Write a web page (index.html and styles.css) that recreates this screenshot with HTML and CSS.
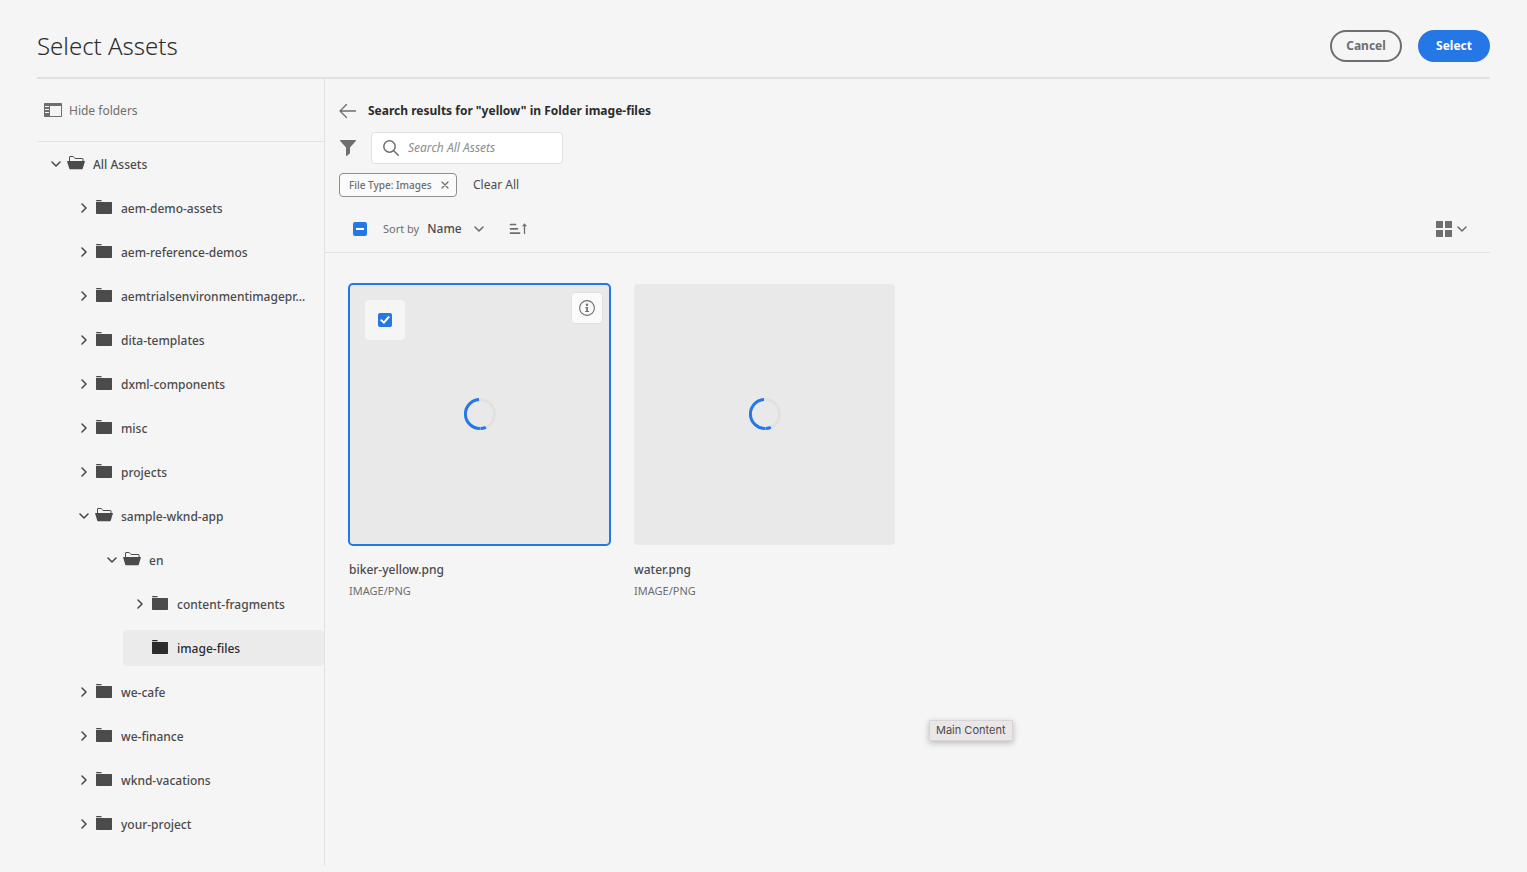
FILE: index.html
```html
<!DOCTYPE html>
<html lang="en">
<head>
<meta charset="utf-8">
<title>Select Assets</title>
<link rel="stylesheet" href="styles.css">
</head>
<body>
<svg class="sprite" aria-hidden="true">
  <symbol id="folder" viewBox="0 0 18 18"><path d="M1 2.200V1.800C1 1.300 1.400 1 1.800 1H5.500C6 1 6.300 1.200 6.600 1.500L7.200 2.200ZM1 3H16.500C16.800 3 17 3.200 17 3.500V14.300C17 14.700 16.700 15 16.300 15H1.700C1.300 15 1 14.700 1 14.300Z"/></symbol>
  <symbol id="folder-open" viewBox="0 0 18 18"><path d="M2.500 7V2C2.500 1.700 2.700 1.500 3 1.500H6.200L8 3.500H15.500C15.800 3.500 16 3.700 16 4V7" fill="none" stroke="currentColor"/><path d="M.4 6H17.600C17.900 6 18 6.200 17.900 6.500L15.700 13.700C15.600 14 15.400 14.200 15.100 14.200H2.900C2.600 14.200 2.400 14 2.300 13.700L.1 6.500C0 6.200.1 6 .4 6Z"/></symbol>
  <symbol id="chevron" viewBox="0 0 12 12"><path d="M2 4L6 8L10 4" fill="none" stroke="currentColor" stroke-width="1.600" stroke-linecap="round" stroke-linejoin="round"/></symbol>
  <symbol id="spinner" viewBox="0 0 32 32"><g fill="none" stroke-width="3"><circle cx="16" cy="16" r="14.500" stroke="#e1e1e1"/><path stroke="#2577e5" d="M15 1.530A14.500 14.500 0 0 0 15.900 30.500M16.400 30.490A14.500 14.500 0 0 0 21.800 29.300"/></g></symbol>
</svg>

<div class="dialog">
  <header class="header">
    <h1 class="title">Select Assets</h1>
    <div class="actions">
      <button class="pill" type="button">Cancel</button>
      <button class="pill pill-primary" type="button">Select</button>
    </div>
  </header>

  <div class="body">
    <aside class="sidebar">
      <div class="sidebar-head">
        <button class="hide-folders" type="button">
          <svg class="icon" viewBox="0 0 18 18"><path fill-rule="evenodd" d="M.7 2H17.300C17.700 2 18 2.300 18 2.700V15.300C18 15.700 17.700 16 17.300 16H.7C.3 16 0 15.700 0 15.300V2.700C0 2.300.3 2 .7 2ZM6 5V15H17V5ZM1 5V6H5V5ZM1 8V9H5V8ZM1 11V12H5V11Z"/></svg>
          <span>Hide folders</span>
        </button>
      </div>
      <nav class="tree" aria-label="Folders">
        <ul>
          <li><button class="node open" type="button"><svg class="chev"><use href="#chevron"/></svg><svg class="icon"><use href="#folder-open"/></svg><span>All Assets</span></button>
            <ul>
              <li><button class="node" type="button"><svg class="chev"><use href="#chevron"/></svg><svg class="icon"><use href="#folder"/></svg><span>aem-demo-assets</span></button></li>
              <li><button class="node" type="button"><svg class="chev"><use href="#chevron"/></svg><svg class="icon"><use href="#folder"/></svg><span>aem-reference-demos</span></button></li>
              <li><button class="node" type="button"><svg class="chev"><use href="#chevron"/></svg><svg class="icon"><use href="#folder"/></svg><span>aemtrialsenvironmentimagepr…</span></button></li>
              <li><button class="node" type="button"><svg class="chev"><use href="#chevron"/></svg><svg class="icon"><use href="#folder"/></svg><span>dita-templates</span></button></li>
              <li><button class="node" type="button"><svg class="chev"><use href="#chevron"/></svg><svg class="icon"><use href="#folder"/></svg><span>dxml-components</span></button></li>
              <li><button class="node" type="button"><svg class="chev"><use href="#chevron"/></svg><svg class="icon"><use href="#folder"/></svg><span>misc</span></button></li>
              <li><button class="node" type="button"><svg class="chev"><use href="#chevron"/></svg><svg class="icon"><use href="#folder"/></svg><span>projects</span></button></li>
              <li><button class="node open" type="button"><svg class="chev"><use href="#chevron"/></svg><svg class="icon"><use href="#folder-open"/></svg><span>sample-wknd-app</span></button>
                <ul>
                  <li><button class="node open" type="button"><svg class="chev"><use href="#chevron"/></svg><svg class="icon"><use href="#folder-open"/></svg><span>en</span></button>
                    <ul>
                      <li><button class="node" type="button"><svg class="chev"><use href="#chevron"/></svg><svg class="icon"><use href="#folder"/></svg><span>content-fragments</span></button></li>
                      <li><button class="node leaf selected" type="button"><svg class="icon"><use href="#folder"/></svg><span>image-files</span></button></li>
                    </ul>
                  </li>
                </ul>
              </li>
              <li><button class="node" type="button"><svg class="chev"><use href="#chevron"/></svg><svg class="icon"><use href="#folder"/></svg><span>we-cafe</span></button></li>
              <li><button class="node" type="button"><svg class="chev"><use href="#chevron"/></svg><svg class="icon"><use href="#folder"/></svg><span>we-finance</span></button></li>
              <li><button class="node" type="button"><svg class="chev"><use href="#chevron"/></svg><svg class="icon"><use href="#folder"/></svg><span>wknd-vacations</span></button></li>
              <li><button class="node" type="button"><svg class="chev"><use href="#chevron"/></svg><svg class="icon"><use href="#folder"/></svg><span>your-project</span></button></li>
            </ul>
          </li>
        </ul>
      </nav>
    </aside>

    <main class="main">
      <div class="crumb">
        <button class="plain" type="button" aria-label="Back"><svg class="icon" viewBox="0 0 18 18"><path d="M16.500 9H1.500M7.500 2.500L1 9L7.500 15.500" fill="none" stroke="currentColor" stroke-width="1.300" stroke-linecap="round" stroke-linejoin="round"/></svg></button>
        <h2 class="crumb-title">Search results for "yellow" in Folder image-files</h2>
      </div>
      <div class="search-row">
        <button class="plain" type="button" aria-label="Filter"><svg class="icon" viewBox="0 0 18 18"><path d="M1.600 1H16.400C16.900 1 17.100 1.600 16.800 2L11 8.500V14.200L7.800 16.900C7.500 17.100 7 16.900 7 16.500V8.500L1.200 2C.9 1.600 1.100 1 1.600 1Z"/></svg></button>
        <div class="search">
          <svg class="icon" viewBox="0 0 18 18"><g fill="none" stroke="currentColor" stroke-width="1.500" stroke-linecap="round"><circle cx="7.500" cy="7.500" r="5.700"/><path d="M11.700 11.700L16.300 16.300"/></g></svg>
          <input type="search" aria-label="Search All Assets" placeholder="Search All Assets">
        </div>
      </div>
      <div class="chips">
        <span class="chip">File Type: Images <button class="plain" type="button" aria-label="Remove filter"><svg class="cross" viewBox="0 0 8 8"><path d="M1 1L7 7M7 1L1 7" stroke="currentColor" stroke-width="1.300" stroke-linecap="round"/></svg></button></span>
        <button class="clear" type="button">Clear All</button>
      </div>
      <div class="toolbar">
        <input class="box mixed" type="checkbox" checked aria-label="Select all">
        <label class="sort-label" for="sort">Sort by</label>
        <div class="picker">
          <select id="sort"><option>Name</option></select>
          <svg class="chev"><use href="#chevron"/></svg>
        </div>
        <button class="plain" type="button" aria-label="Sort ascending"><svg class="icon" viewBox="0 0 18 18"><path d="M1.500 4.500H6.500M1.500 8.800H8.500M1.500 13.200H10.500" stroke="currentColor" stroke-width="1.700" stroke-linecap="round"/><path d="M15.500 14V5" stroke="currentColor" stroke-width="1.300"/><path d="M15.500 3.200L18 6.200H13Z"/></svg></button>
        <button class="plain view" type="button" aria-label="View"><svg class="icon" viewBox="0 0 18 18"><path d="M1 1.500C1 1.200 1.200 1 1.500 1H8V8H1ZM10 1H16.500C16.800 1 17 1.200 17 1.500V8H10ZM1 10H8V17H1.500C1.200 17 1 16.800 1 16.500ZM10 10H17V16.500C17 16.800 16.800 17 16.500 17H10Z"/></svg><svg class="chev"><use href="#chevron"/></svg></button>
      </div>

      <section class="cards" aria-label="Assets">
        <article class="card">
          <div class="thumb chosen">
            <svg class="spinner"><use href="#spinner"/></svg>
            <label class="pick"><input class="box tick" type="checkbox" checked aria-label="biker-yellow.png"></label>
            <button class="info" type="button" aria-label="Details"><svg class="icon" viewBox="0 0 18 18"><circle cx="9" cy="9" r="7.400" fill="none" stroke="currentColor" stroke-width="1.100"/><circle cx="9" cy="5.700" r="1.200"/><path d="M7.300 8H9.900V11.900H11V13H7.200V11.900H8.200V9H7.300Z"/></svg></button>
          </div>
          <h3 class="name">biker-yellow.png</h3>
          <p class="kind">IMAGE/PNG</p>
        </article>
        <article class="card">
          <div class="thumb"><svg class="spinner"><use href="#spinner"/></svg></div>
          <h3 class="name">water.png</h3>
          <p class="kind">IMAGE/PNG</p>
        </article>
      </section>
      <div class="tooltip" role="tooltip">Main Content</div>
    </main>
  </div>
</div>
</body>
</html>
```
FILE: styles.css
```css
* { box-sizing: border-box; }

body {
  margin: 0;
  background: #f5f5f5;
  color: #4b4b4b;
  font: 12px/18px "Noto Sans", "Open Sans", sans-serif;
}

button, input, select { font: inherit; color: inherit; }
button { margin: 0; padding: 0; border: 0; background: none; cursor: pointer; }
ul { list-style: none; margin: 0; padding: 0; }
svg { flex: none; fill: currentColor; }

.sprite { display: none; }
.icon { display: block; width: 18px; height: 18px; }
.chev { display: block; width: 12px; height: 12px; }

.dialog {
  min-height: 100vh;
  padding: 14px 37px 6px;
  display: flex;
  flex-direction: column;
}

.header {
  display: flex;
  align-items: center;
  justify-content: space-between;
  height: 65px;
  border-bottom: 2px solid #e1e1e1;
}
.title { margin: 0; font-size: 24px; line-height: 32px; font-weight: 300; color: #2c2c2c; }
.actions { display: flex; gap: 16px; }
.pill {
  height: 32px;
  min-width: 72px;
  border: 2px solid #6e6e6e;
  border-radius: 16px;
  color: #6e6e6e;
  font-weight: 700;
}
.pill-primary { border-color: #2577e5; background: #2577e5; color: #fff; }

.body { flex: 1; display: flex; }

.sidebar { width: 288px; flex: none; border-right: 1px solid #e1e1e1; }
.sidebar-head {
  display: flex;
  align-items: center;
  height: 63px;
  padding-left: 7px;
  border-bottom: 1px solid #e1e1e1;
}
.hide-folders { display: flex; align-items: center; gap: 7px; color: #6e6e6e; }
.hide-folders span, .node span { padding-top: 2px; }

.tree { padding: 4px 0 0 2px; }
.tree ul ul { padding-left: 28px; }
.node {
  display: flex;
  align-items: center;
  width: 100%;
  height: 36px;
  margin-bottom: 8px;
  padding-left: 11px;
  border-radius: 4px;
  font-weight: 500;
  text-align: left;
  white-space: nowrap;
}
.node .chev { margin-right: 5px; transform: rotate(-90deg); }
.node.open .chev { transform: none; }
.node .icon { margin-right: 8px; }
.leaf { padding-left: 28px; }
.selected { background: #ebebeb; color: #2c2c2c; }

.main { flex: 1; min-width: 0; position: relative; }
.plain { display: flex; align-items: center; color: #6e6e6e; }

.crumb { display: flex; align-items: center; gap: 11px; padding: 23px 14px 12px; }
.crumb-title { margin: 0; font-size: 12px; line-height: 18px; font-weight: 700; color: #2c2c2c; }

.search-row { display: flex; align-items: center; gap: 14px; padding-left: 14px; }
.search {
  display: flex;
  align-items: center;
  gap: 8px;
  width: 192px;
  height: 32px;
  padding: 0 10px;
  border: 1px solid #e1e1e1;
  border-radius: 4px;
  background: #fff;
  color: #6e6e6e;
}
.search input { flex: 1; min-width: 0; padding: 0; border: 0; outline: 0; background: none; }
.search input::placeholder { color: #8e8e8e; font-style: italic; }

.chips { display: flex; align-items: center; gap: 16px; padding: 9px 14px 0; }
.chip {
  display: flex;
  align-items: center;
  justify-content: space-between;
  gap: 8px;
  min-width: 118px;
  height: 24px;
  padding: 0 7px 0 9px;
  border: 1px solid #8e8e8e;
  border-radius: 4px;
  background: #fafafa;
  color: #6e6e6e;
  font-size: 10px;
  font-weight: 500;
}
.cross { display: block; width: 8px; height: 8px; }

.toolbar {
  display: flex;
  align-items: center;
  height: 56px;
  padding: 8px 22px 0 28px;
  border-bottom: 1px solid #e1e1e1;
}
.box {
  display: grid;
  place-items: center;
  appearance: none;
  width: 14px;
  height: 14px;
  margin: 0;
  border-radius: 2px;
  background: #2577e5;
}
.mixed::before { content: ""; width: 8px; height: 2px; background: #fff; }
.tick::before {
  content: "";
  width: 10px;
  height: 8px;
  background: #fff;
  clip-path: polygon(0 52%, 14% 38%, 38% 66%, 82% 0, 100% 12%, 40% 100%);
}
.sort-label { margin: 0 8px 0 16px; font-size: 11px; color: #6e6e6e; }
.picker { display: grid; align-items: center; width: 58px; margin-right: 24px; }
.picker select, .picker .chev { grid-area: 1 / 1; }
.picker select { appearance: none; padding: 0; border: 0; background: none; outline: 0; font-weight: 500; }
.picker .chev { justify-self: end; pointer-events: none; color: #6e6e6e; }
.view { margin-left: auto; gap: 3px; }

.cards {
  display: grid;
  grid-template-columns: repeat(auto-fill, minmax(256px, 1fr));
  gap: 24px;
  padding: 31px 25px 24px 24px;
}
.thumb {
  position: relative;
  display: grid;
  place-items: center;
  aspect-ratio: 1;
  padding-bottom: 1px;
  border-radius: 4px;
  background: #e9e9e9;
}
.chosen { outline: 2px solid #2577e5; outline-offset: -1px; }
.spinner { width: 32px; height: 32px; }
.pick {
  position: absolute;
  top: 16px;
  left: 16px;
  display: grid;
  place-items: center;
  width: 40px;
  height: 40px;
  border-radius: 4px;
  background: #f5f5f5;
}
.info {
  position: absolute;
  top: 8px;
  right: 7px;
  display: grid;
  place-items: center;
  width: 32px;
  height: 32px;
  border: 1px solid #e1e1e1;
  border-radius: 4px;
  background: #fafafa;
  color: #6e6e6e;
}
.name { margin: 16px 0 0; font-size: 12px; line-height: 18px; font-weight: 500; }
.kind { margin: 3px 0 0; font-size: 11px; line-height: 18px; color: #6e6e6e; }

.tooltip {
  position: absolute;
  left: 604px;
  top: 641px;
  padding: 1px 6px 2px;
  border: 1px solid #d8d5d6;
  background: #ebe6e8;
  box-shadow: 0 2px 6px rgba(0, 0, 0, .25);
  font-family: Inter, "Liberation Sans", sans-serif;
  font-size: 11px;
  line-height: 16px;
}
```
